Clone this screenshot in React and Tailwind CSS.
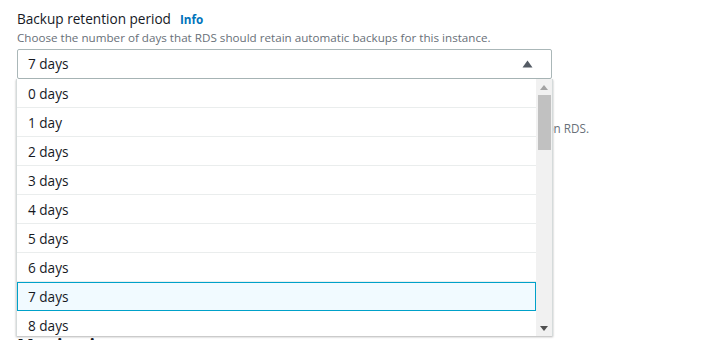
import React from 'react';

const options = ['0 days', '1 day', '2 days', '3 days', '4 days', '5 days', '6 days', '7 days', '8 days'];

const App = () => {
  const selected = '7 days';

  return (
    <div className="relative h-[340px] w-[715px] overflow-hidden bg-white font-['Open_Sans',sans-serif] text-[#16191f]">
      <div className="pl-[17px] pt-[8px]">
        {/* Field label */}
        <div className="flex items-baseline gap-[9px]">
          <span className="text-[13.6px] leading-[22px]">Backup retention period</span>
          <span className="text-[11.7px] font-bold text-[#0073bb]">Info</span>
        </div>
        <p className="text-[11.65px] leading-[16px] text-[#687078]">
          Choose the number of days that RDS should retain automatic backups for this instance.
        </p>

        {/* Select */}
        <div className="relative mt-[3px] w-[535px]">
          <button className="flex h-[30px] w-full items-center justify-between rounded-[2px] border border-[#aab7b8] bg-white pl-[10px] pr-[18px] text-left text-[13.6px]">
            <span>{selected}</span>
            <svg width="11" height="8" viewBox="0 0 11 8">
              <path d="M5.5 0.5 L10.5 7.5 L0.5 7.5 Z" fill="#545b64" />
            </svg>
          </button>

          {/* Dropdown list */}
          <div className="absolute left-[-1px] top-[30px] z-10 flex h-[257px] w-[537px] overflow-hidden border-l border-r border-[#d5dbdb] bg-white shadow-[0_1px_2px_rgba(0,0,0,0.3)]">
            <ul className="flex-1">
              {options.map((opt) => (
                <li
                  key={opt}
                  className={
                    opt === selected
                      ? 'flex h-[29px] items-center border border-[#00a1c9] bg-[#f1faff] pl-[10px] pt-[2px] text-[13.6px]'
                      : 'flex h-[29px] items-center border-b border-[#eaeded] pl-[11px] pt-[2px] text-[13.6px]'
                  }
                >
                  {opt}
                </li>
              ))}
            </ul>
            {/* Scrollbar */}
            <div className="flex w-[16px] flex-col items-center bg-[#f1f1f1]">
              <div className="flex h-[16px] items-center justify-center">
                <svg width="8" height="5" viewBox="0 0 8 5">
                  <path d="M4 0 L8 5 L0 5 Z" fill="#a3a3a3" />
                </svg>
              </div>
              <div className="h-[55px] w-[13px] bg-[#c1c1c1]" />
              <div className="flex-1" />
              <div className="flex h-[16px] items-center justify-center">
                <svg width="8" height="5" viewBox="0 0 8 5">
                  <path d="M0 0 L8 0 L4 5 Z" fill="#505050" />
                </svg>
              </div>
            </div>
          </div>
        </div>

        {/* Content under the open dropdown */}
        <div className="mt-[21px]">
          <div className="text-[13.6px] leading-[20px]">Backup window</div>
          <p className="text-[11.7px] leading-[16px] text-[#687078]">
            Select the period for which you want automated backups of your database to be created by Amazon RDS.
          </p>
        </div>
        <h2 className="mt-[196.5px] text-[18px] font-bold leading-[24px]">Monitoring</h2>
      </div>
    </div>
  );
};

export default App;
